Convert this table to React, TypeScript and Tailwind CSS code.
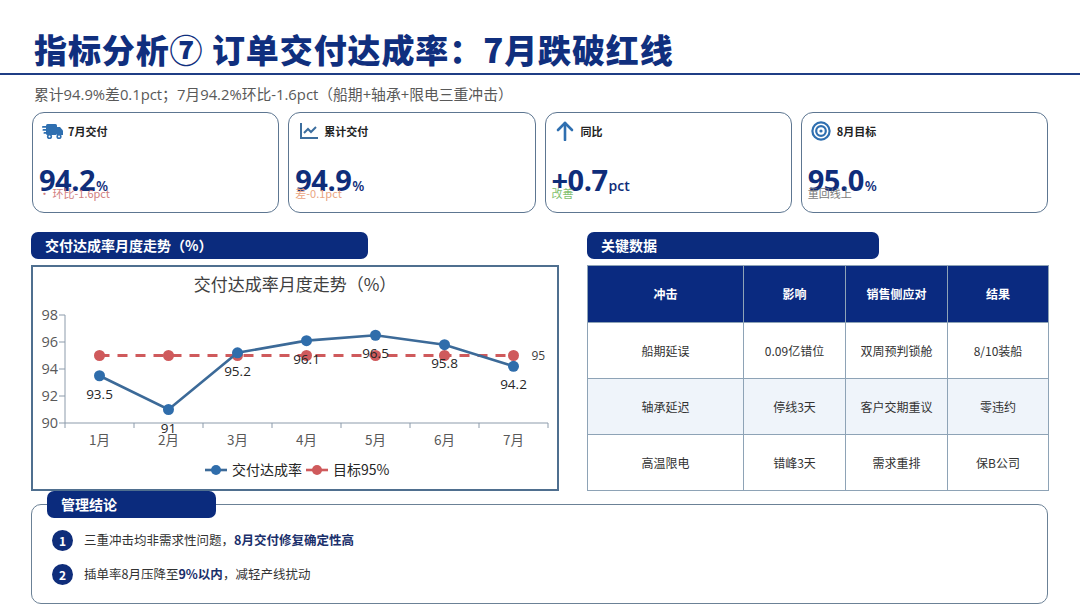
import React from "react";

const FONT = '"Open Sans", "Noto Sans CJK SC", sans-serif';
const CJK = '"Noto Sans CJK SC", "Open Sans", sans-serif';

function TruckIcon() {
  return (
    <svg width="21" height="17" viewBox="0 0 21 17">
      <g fill="#2f6fb0">
        <rect x="4" y="1" width="11" height="11" rx="1.5" />
        <path d="M15 4h3l3 3.5V12h-6z" />
        <circle cx="7.5" cy="13.5" r="2.6" />
        <circle cx="17" cy="13.5" r="2.6" />
        <rect x="0" y="3" width="6" height="1.8" rx="0.9" />
        <rect x="0.5" y="6" width="5" height="1.8" rx="0.9" />
        <rect x="1.5" y="9" width="4" height="1.8" rx="0.9" />
      </g>
      <circle cx="7.5" cy="13.5" r="1" fill="#fff" />
      <circle cx="17" cy="13.5" r="1" fill="#fff" />
    </svg>
  );
}

function LineChartIcon() {
  return (
    <svg width="20" height="18" viewBox="0 0 20 18" fill="none" stroke="#3c6e9e" strokeWidth="2">
      <path d="M2 1v15h17" />
      <path d="M5 11l4-4 3 3 5-5" />
    </svg>
  );
}

function ArrowUpIcon() {
  return (
    <svg width="18" height="20" viewBox="0 0 18 20" fill="none" stroke="#2f6fb0" strokeWidth="2.6" strokeLinecap="round" strokeLinejoin="round">
      <path d="M9 19V2" />
      <path d="M2 9l7-7 7 7" />
    </svg>
  );
}

function TargetIcon() {
  return (
    <svg width="20" height="20" viewBox="0 0 20 20" fill="none">
      <circle cx="10" cy="10" r="8.6" stroke="#2f6fb0" strokeWidth="2.2" />
      <circle cx="10" cy="10" r="4.8" stroke="#2f6fb0" strokeWidth="2.2" />
      <circle cx="10" cy="10" r="1.6" fill="#2f6fb0" />
    </svg>
  );
}

function KpiCard({
  icon,
  label,
  value,
  unit,
  sub,
  subColor,
}: {
  icon: React.ReactNode;
  label: string;
  value: string;
  unit: string;
  sub: string;
  subColor: string;
}) {
  return (
    <div className="flex h-[101px] flex-col rounded-[12px] border-[1.5px] border-[#5d7691] bg-white pl-[6px]">
      <div className="mt-[8px] flex h-[20px] items-center gap-[5px] pl-[3px]">
        <div className="flex w-[21px] justify-center">{icon}</div>
        <span className="text-[11px] font-bold text-[#222]" style={{ fontFamily: CJK }}>
          {label}
        </span>
      </div>
      <div className="mt-[24px] flex items-baseline leading-none text-[#0f2d7a]" style={{ fontFamily: FONT }}>
        <span className="text-[29px] font-bold tracking-[-0.5px]">{value}</span>
        <span className="ml-[1px] text-[14px] font-semibold">{unit}</span>
      </div>
      <div className="-mt-[6px] text-[11px] leading-none" style={{ color: subColor, fontFamily: CJK }}>
        {sub}
      </div>
    </div>
  );
}

function Chart() {
  const vals = [93.5, 91, 95.2, 96.1, 96.5, 95.8, 94.2];
  const months = ["1月", "2月", "3月", "4月", "5月", "6月", "7月"];
  const x0 = 32;
  const cw = 69;
  const yOf = (v: number) => 156 - (v - 90) * 13.5;
  const cx = (i: number) => x0 + cw / 2 + cw * i;
  const pts = vals.map((v, i) => `${cx(i)},${yOf(v)}`).join(" ");
  const ty = yOf(95);
  return (
    <svg width="524" height="222" viewBox="0 0 524 222" style={{ fontFamily: CJK }}>
      <text x="262" y="24" textAnchor="middle" fontSize="17" fill="#404040">
        交付达成率月度走势（%）
      </text>
      {[98, 96, 94, 92, 90].map((v) => (
        <g key={v}>
          <text x="25" y={yOf(v) + 5} textAnchor="end" fontSize="14.5" fill="#595959" fontFamily='"Open Sans", sans-serif'>
            {v}
          </text>
          <line x1="26" x2={x0} y1={yOf(v)} y2={yOf(v)} stroke="#8c9bab" strokeWidth="1" />
        </g>
      ))}
      <line x1={x0} x2={x0} y1={yOf(98)} y2={156} stroke="#8c9bab" strokeWidth="1" />
      <line x1={x0} x2={x0 + cw * 7} y1={156} y2={156} stroke="#8c9bab" strokeWidth="1" />
      {Array.from({ length: 8 }).map((_, k) => (
        <line key={k} x1={x0 + cw * k} x2={x0 + cw * k} y1={156} y2={161} stroke="#8c9bab" strokeWidth="1" />
      ))}
      {months.map((m, i) => (
        <text key={m} x={cx(i)} y={178} textAnchor="middle" fontSize="13.5" fill="#595959">
          {m}
        </text>
      ))}
      <line x1={cx(0)} x2={cx(6)} y1={ty} y2={ty} stroke="#cf5a5c" strokeWidth="3" strokeDasharray="10 8" />
      {vals.map((_, i) => (
        <circle key={"t" + i} cx={cx(i)} cy={ty} r="5.5" fill="#cf5a5c" />
      ))}
      <text x={cx(6) + 18} y={ty + 4} fontSize="12" fill="#404040" fontFamily='"Open Sans", sans-serif'>
        95
      </text>
      <polyline points={pts} fill="none" stroke="#3c6a98" strokeWidth="2.6" />
      {vals.map((v, i) => (
        <circle key={"a" + i} cx={cx(i)} cy={yOf(v)} r="5.5" fill="#2f6dab" />
      ))}
      {vals.map((v, i) => (
        <text key={"l" + i} x={cx(i)} y={yOf(v) + 23} textAnchor="middle" fontSize="13.5" fill="#262626" fontFamily='"Open Sans", sans-serif'>
          {v}
        </text>
      ))}
      <line x1="172" x2="194" y1="203" y2="203" stroke="#3c6a98" strokeWidth="2.6" />
      <circle cx="183" cy="203" r="5" fill="#2f6dab" />
      <text x="199" y="208" fontSize="14" fill="#262626">
        交付达成率
      </text>
      <line x1="273" x2="295" y1="203" y2="203" stroke="#cf5a5c" strokeWidth="2.6" />
      <circle cx="284" cy="203" r="5" fill="#cf5a5c" />
      <text x="300" y="208" fontSize="14" fill="#262626">
        目标95%
      </text>
    </svg>
  );
}

function SectionPill({ text, w }: { text: string; w: string }) {
  return (
    <div
      className={`flex h-[27px] items-center rounded-[7px] bg-[#0b2b7d] pl-[14px] text-[14px] font-bold text-white ${w}`}
      style={{ fontFamily: CJK }}
    >
      {text}
    </div>
  );
}

export default function App() {
  const rows = [
    ["船期延误", "0.09亿错位", "双周预判锁舱", "8/10装船"],
    ["轴承延迟", "停线3天", "客户交期重议", "零违约"],
    ["高温限电", "错峰3天", "需求重排", "保B公司"],
  ];
  return (
    <div className="h-[608px] w-[1080px] overflow-hidden bg-white" style={{ fontFamily: CJK }}>
      <div className="pl-[34px] pt-[29px]">
        <h1 className="text-[33px] font-black leading-[40px] tracking-[0.9px] text-[#102f7e]">
          指标分析⑦ 订单交付达成率：7月跌破红线
        </h1>
      </div>
      <div className="mt-[4px] h-[2px] w-full bg-[#1f3d85]" />
      <div className="mt-[10px] pl-[34px] text-[14.8px] leading-[18px] text-[#595959]" style={{ fontFamily: FONT }}>
        累计94.9%差0.1pct；7月94.2%环比-1.6pct（船期+轴承+限电三重冲击）
      </div>

      <div className="ml-[32px] mr-[32px] mt-[9px] grid grid-cols-4 gap-[9px]">
        <KpiCard icon={<TruckIcon />} label="7月交付" value="94.2" unit="%" sub="• 环比-1.6pct" subColor="#d27f80" />
        <KpiCard icon={<LineChartIcon />} label="累计交付" value="94.9" unit="%" sub="差-0.1pct" subColor="#eaa47f" />
        <KpiCard icon={<ArrowUpIcon />} label="同比" value="+0.7" unit="pct" sub="改善" subColor="#7fbf6e" />
        <KpiCard icon={<TargetIcon />} label="8月目标" value="95.0" unit="%" sub="重回线上" subColor="#7a7a7a" />
      </div>

      <div className="ml-[31px] mr-[32px] mt-[19px] flex gap-[28px]">
        <div className="flex w-[528px] flex-col gap-[6px]">
          <SectionPill text="交付达成率月度走势（%）" w="w-[337px]" />
          <div className="h-[226px] border-2 border-[#4f6f8f] bg-white">
            <Chart />
          </div>
        </div>
        <div className="flex flex-1 flex-col gap-[6px]">
          <SectionPill text="关键数据" w="w-[292px]" />
          <table className="h-[226px] w-[461px] table-fixed border-collapse text-center text-[12px]">
            <colgroup>
              <col className="w-[156px]" />
              <col className="w-[102px]" />
              <col className="w-[102px]" />
              <col className="w-[101px]" />
            </colgroup>
            <thead>
              <tr className="h-[57px] bg-[#0a2a80] text-white">
                {["冲击", "影响", "销售侧应对", "结果"].map((h) => (
                  <th key={h} className="border border-[#8ea3b6] font-bold">
                    {h}
                  </th>
                ))}
              </tr>
            </thead>
            <tbody>
              {rows.map((r, i) => (
                <tr key={i} className={`h-[56px] ${i === 1 ? "bg-[#eff4fa]" : "bg-white"}`}>
                  {r.map((c, j) => (
                    <td key={j} className="border border-[#8ea3b6] text-[#333]">
                      {c}
                    </td>
                  ))}
                </tr>
              ))}
            </tbody>
          </table>
        </div>
      </div>

      <div className="relative ml-[31px] mr-[32px] mt-[13px] h-[100px] rounded-[10px] border-[1.5px] border-[#6b8196] bg-white">
        <div className="absolute -top-[14px] left-[15px] flex h-[27px] w-[169px] items-center rounded-[7px] bg-[#0b2b7d] pl-[14px] text-[14px] font-bold text-white">
          管理结论
        </div>
        <div className="flex flex-col gap-[13px] pl-[20px] pt-[25px]">
          <div className="flex items-center gap-[11px] text-[12.5px] text-[#333]">
            <span className="flex h-[21px] w-[21px] items-center justify-center rounded-full bg-[#0f2d7a] text-[12px] font-bold text-white">
              1
            </span>
            <span>
              三重冲击均非需求性问题，<b className="font-bold text-[#1a2f6b]">8月交付修复确定性高</b>
            </span>
          </div>
          <div className="flex items-center gap-[11px] text-[12.5px] text-[#333]">
            <span className="flex h-[21px] w-[21px] items-center justify-center rounded-full bg-[#0f2d7a] text-[12px] font-bold text-white">
              2
            </span>
            <span>
              插单率8月压降至<b className="font-bold text-[#1a2f6b]">9%以内</b>，减轻产线扰动
            </span>
          </div>
        </div>
      </div>
    </div>
  );
}
